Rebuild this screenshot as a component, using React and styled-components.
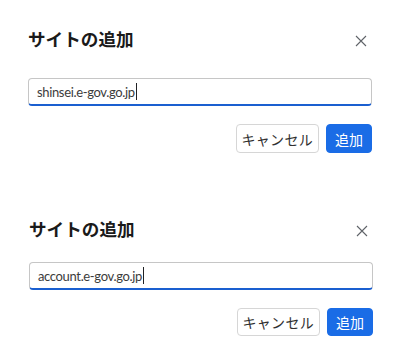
import React from 'react'
import styled, { createGlobalStyle } from 'styled-components'

const GlobalStyle = createGlobalStyle`
    body {
        margin: 0;
        background: #ffffff;
        font-family: "Noto Sans", "Noto Sans CJK JP", sans-serif;
        color: #202124;
    }
`;

const Page = styled.div`
    width: 400px;
    height: 363px;
    overflow: hidden;
    background: #ffffff;
`;

const Dialog = styled.section`
    display: flex;
    flex-direction: column;
    padding: 27px ${props => props.$right}px 37px ${props => props.$left}px;
`;

const Header = styled.div`
    display: flex;
    align-items: center;
    justify-content: space-between;
    height: 24px;
`;

const Title = styled.h2`
    margin: 0;
    font-family: "Noto Sans CJK JP", sans-serif;
    font-size: 17.6px;
    line-height: 24px;
    font-weight: 700;
    color: #1a1a1a;
`;

const CloseButton = styled.button`
    display: flex;
    align-items: center;
    justify-content: center;
    width: 16px;
    height: 16px;
    margin: 4px 3px 0 0;
    padding: 0;
    border: none;
    background: none;
    color: #5f6368;
`;

const Field = styled.div`
    display: flex;
    align-items: center;
    height: 28px;
    box-sizing: border-box;
    margin-top: ${props => props.$gap}px;
    padding: 0 8px;
    border: 1px solid #c6c6c6;
    border-bottom: 2px solid #1a5fd0;
    border-radius: 4px;
    font-family: Lato, "Noto Sans CJK JP", sans-serif;
    font-size: 13px;
    letter-spacing: -0.35px;
    color: #3c3c3c;
`;

const Caret = styled.span`
    display: inline-block;
    width: 1px;
    height: 17px;
    margin-left: 1px;
    background: #202124;
`;

const Actions = styled.div`
    display: flex;
    justify-content: flex-end;
    gap: 7px;
    margin-top: 18px;
`;

const Button = styled.button`
    height: ${props => props.$height}px;
    box-sizing: border-box;
    padding: 0 ${props => props.$pad}px;
    border-radius: 4px;
    font-family: "Noto Sans CJK JP", sans-serif;
    font-size: 14px;
    letter-spacing: ${props => (props.$primary ? 0 : 0.3)}px;
    border: 1px solid ${props => (props.$primary ? '#1a6ce6' : '#d6d6d6')};
    background: ${props => (props.$primary ? '#1a6ce6' : '#ffffff')};
    color: ${props => (props.$primary ? '#ffffff' : '#303030')};
`;

const CloseIcon = () => (
    <svg width="12" height="12" viewBox="0 0 12 12">
        <path d="M1 1 L11 11 M11 1 L1 11" stroke="currentColor" strokeWidth="1.1" fill="none" />
    </svg>
);

const AddSiteDialog = ({ value, gap, left, right, height }) => (
    <Dialog $left={left} $right={right}>
        <Header>
            <Title>サイトの追加</Title>
            <CloseButton aria-label="閉じる"><CloseIcon /></CloseButton>
        </Header>
        <Field $gap={gap}>
            {value}<Caret />
        </Field>
        <Actions>
            <Button $height={height} $pad={5}>キャンセル</Button>
            <Button $height={height} $pad={8} $primary>追加</Button>
        </Actions>
    </Dialog>
);

const App = () => (
    <Page>
        <GlobalStyle />
        <AddSiteDialog value="shinsei.e-gov.go.jp" gap={27} left={28} right={28} height={29} />
        <AddSiteDialog value="account.e-gov.go.jp" gap={21} left={29} right={27} height={28} />
    </Page>
)

export default App
